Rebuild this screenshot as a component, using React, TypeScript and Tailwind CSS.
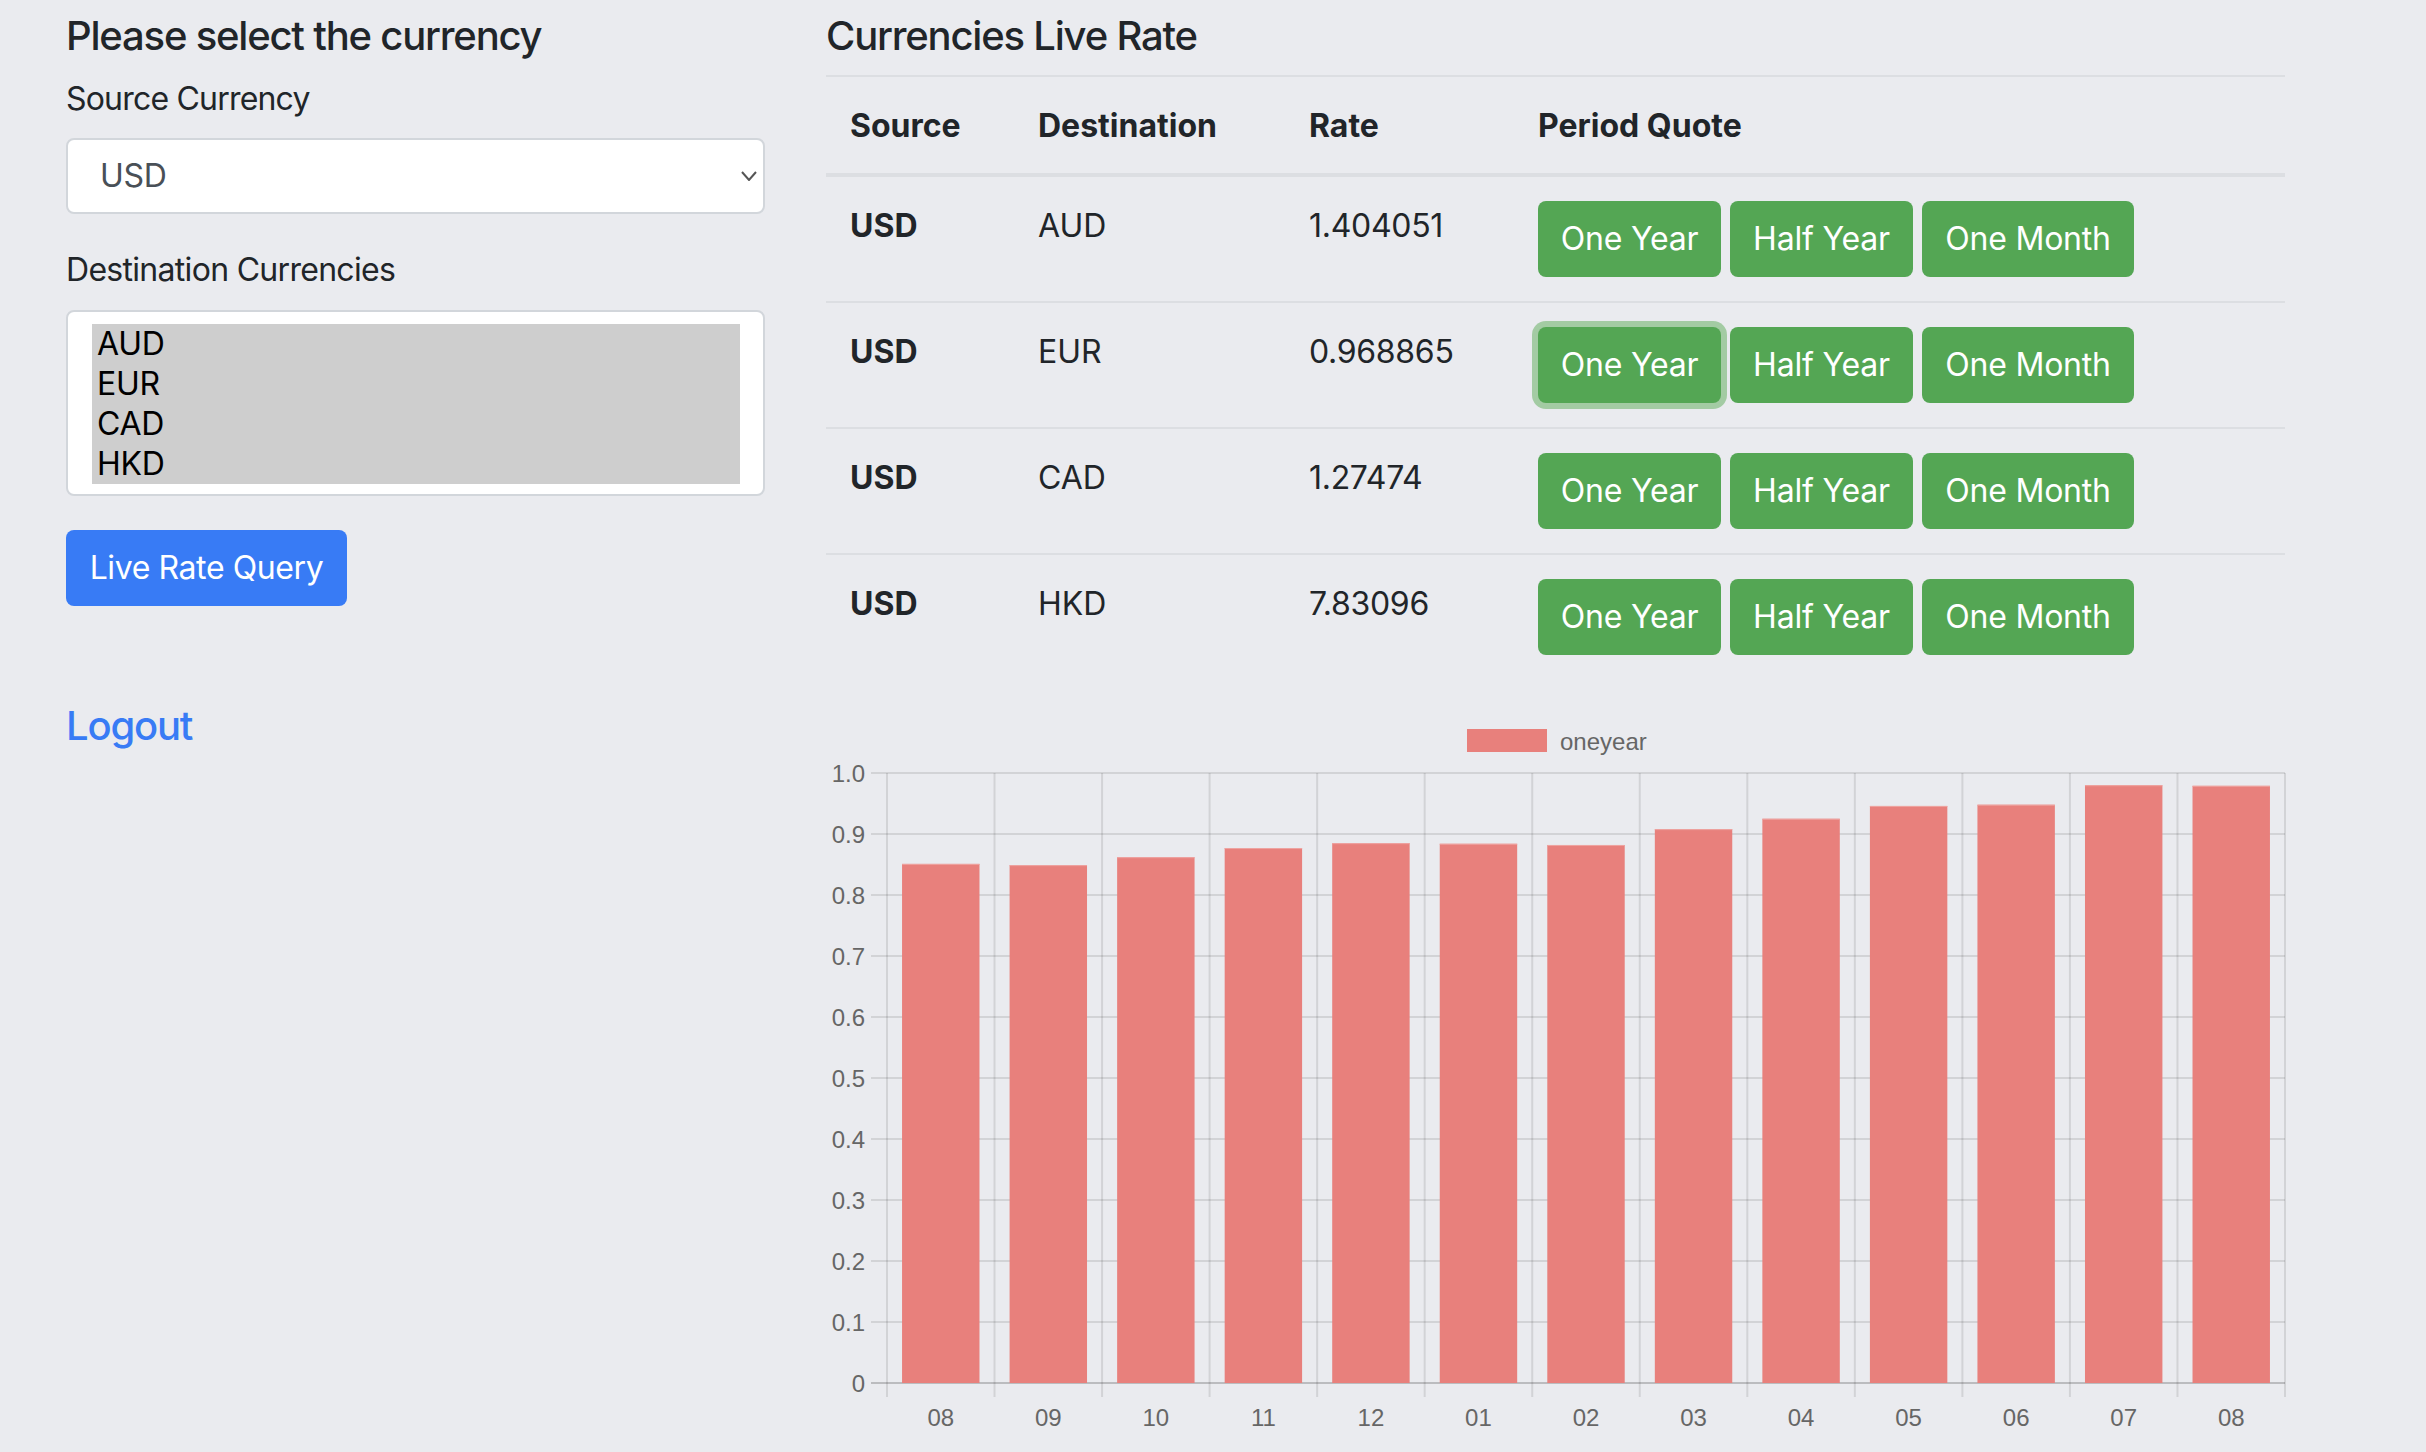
import React from "react";

const bars = [0.851, 0.849, 0.862, 0.877, 0.885, 0.884, 0.882, 0.908, 0.925, 0.946, 0.948, 0.98, 0.979];
const months = ["08", "09", "10", "11", "12", "01", "02", "03", "04", "05", "06", "07", "08"];
const rows = [
  { dst: "AUD", rate: "1.404051" },
  { dst: "EUR", rate: "0.968865" },
  { dst: "CAD", rate: "1.27474" },
  { dst: "HKD", rate: "7.83096" },
];

function Chart() {
  const x0 = 61;
  const x1 = 1459;
  const y0 = 75;
  const yz = 685;
  const step = 61;
  const cw = (x1 - x0) / 13;
  const bw = cw * 0.72;
  const font = "'Liberation Sans', Arial, Helvetica, sans-serif";
  return (
    <svg width={1460} height={752} className="block overflow-visible">
      <rect x={641} y={31} width={80} height={23} fill="#e8807c" />
      <text x={734} y={43} dominantBaseline="central" fontSize={24} fill="#666" fontFamily={font}>
        oneyear
      </text>
      {Array.from({ length: 11 }).map((_, i) => {
        const y = yz - i * step;
        return (
          <g key={"h" + i}>
            <line
              x1={45}
              x2={x1}
              y1={y}
              y2={y}
              stroke={i === 0 ? "rgba(0,0,0,0.2)" : "rgba(0,0,0,0.1)"}
              strokeWidth={2}
            />
            <text
              x={39}
              y={y}
              textAnchor="end"
              dominantBaseline="central"
              fontSize={24}
              fill="#666"
              fontFamily={font}
            >
              {i === 0 ? "0" : i === 10 ? "1.0" : "0." + i}
            </text>
          </g>
        );
      })}
      {Array.from({ length: 14 }).map((_, j) => {
        const x = x0 + j * cw;
        return (
          <line key={"v" + j} x1={x} x2={x} y1={y0} y2={yz + 14} stroke="rgba(0,0,0,0.1)" strokeWidth={2} />
        );
      })}
      {bars.map((v, j) => {
        const cx = x0 + j * cw + cw / 2;
        const top = yz - v * step * 10;
        return (
          <g key={"b" + j}>
            <rect x={cx - bw / 2} y={top} width={bw} height={yz - top} fill="#e8807c" />
            <line x1={cx - bw / 2} x2={cx + bw / 2} y1={top + 0.5} y2={top + 0.5} stroke="#eea4a1" strokeWidth={1} />
            <text
              x={cx}
              y={719}
              textAnchor="middle"
              dominantBaseline="central"
              fontSize={24}
              fill="#666"
              fontFamily={font}
            >
              {months[j]}
            </text>
          </g>
        );
      })}
    </svg>
  );
}

function GreenButton({ label, width, focused }: { label: string; width: string; focused?: boolean }) {
  return (
    <button
      className={
        "h-[76px] rounded-[8px] bg-[#54a654] text-white text-[32px] leading-[48px] tracking-[-0.2px] flex items-center justify-center shrink-0 " +
        width +
        (focused ? " shadow-[0_0_0_6px_#a3cba3]" : "")
      }
    >
      {label}
    </button>
  );
}

export default function App() {
  return (
    <div className="min-h-[1452px] w-full bg-[#eaebef] text-[#212529] font-['Inter','Noto_Sans',sans-serif]">
      <div className="flex pl-[66px] pt-[12px] gap-[61px]">
        <div className="w-[699px] shrink-0 flex flex-col items-start">
          <h5 className="text-[40px] leading-[48px] font-medium mb-[15px] tracking-[-1.2px]">
            Please select the currency
          </h5>
          <label className="text-[32px] leading-[48px] mb-[15px] tracking-[-0.8px]">Source Currency</label>
          <div className="w-full h-[76px] bg-white border-2 border-[#d2d6db] rounded-[8px] flex items-center justify-between pl-[32px] pr-[6px]">
            <span className="text-[32px] leading-[48px] text-[#495057] tracking-[-0.3px]">USD</span>
            <svg width="16" height="10" viewBox="0 0 16 10">
              <path d="M1 1 L8 9 L15 1" fill="none" stroke="#555" strokeWidth="2" />
            </svg>
          </div>
          <label className="mt-[32px] text-[32px] leading-[48px] tracking-[-0.7px]">Destination Currencies</label>
          <div className="mt-[16px] w-full h-[186px] bg-white border-2 border-[#d2d6db] rounded-[8px] pt-[12px] pl-[24px] pr-[23px]">
            <div className="bg-[#cecece]">
              {["AUD", "EUR", "CAD", "HKD"].map((o) => (
                <div key={o} className="h-[40px] leading-[40px] pl-[5px] text-[32px] text-black tracking-[-0.3px]">
                  {o}
                </div>
              ))}
            </div>
          </div>
          <button className="mt-[34px] w-[281px] h-[76px] rounded-[8px] bg-[#387bf5] text-white text-[32px] leading-[48px] tracking-[-0.4px] flex items-center justify-center">
            Live Rate Query
          </button>
          <a className="mt-[96px] text-[40px] leading-[48px] font-medium text-[#387bf5] tracking-[-1.2px]">Logout</a>
        </div>

        <div className="w-[1459px] shrink-0 flex flex-col">
          <h5 className="text-[40px] leading-[48px] font-medium mb-[15px] tracking-[-1.2px]">Currencies Live Rate</h5>
          <div className="border-t-2 border-b-4 border-[#dcdee2] grid grid-cols-[188px_271px_229px_1fr] pt-[25px] pb-[23px] text-[32px] leading-[48px] font-bold">
            <div className="px-[24px]">Source</div>
            <div className="px-[24px]">Destination</div>
            <div className="px-[24px]">Rate</div>
            <div className="px-[24px]">Period Quote</div>
          </div>
          {rows.map((r, i) => (
            <div
              key={r.dst}
              className={
                "grid grid-cols-[188px_271px_229px_1fr] py-[24px] text-[32px] leading-[48px] border-[#dcdee2] " +
                (i > 0 ? "border-t-2" : "")
              }
            >
              <div className="px-[24px] pt-[1px] font-bold">USD</div>
              <div className="px-[24px] pt-[1px]">{r.dst}</div>
              <div className="px-[24px] pt-[1px] tracking-[-0.3px]">{r.rate}</div>
              <div className="px-[24px] flex gap-[9px]">
                <GreenButton label="One Year" width="w-[183px]" focused={i === 1} />
                <GreenButton label="Half Year" width="w-[183px]" />
                <GreenButton label="One Month" width="w-[212px]" />
              </div>
            </div>
          ))}
          <div className="mt-[19px]">
            <Chart />
          </div>
        </div>
      </div>
    </div>
  );
}
